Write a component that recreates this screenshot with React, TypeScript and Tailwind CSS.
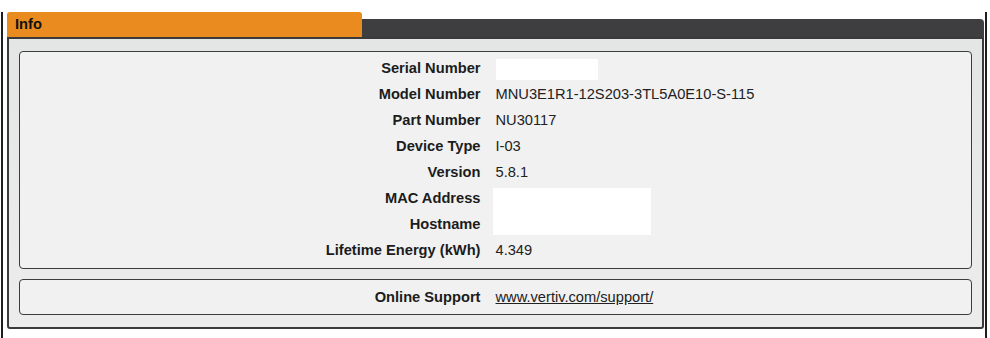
import React from 'react';

interface Row {
  label: string;
  value?: string;
  kind?: 'text' | 'blank' | 'blank2' | 'skip';
}

const rows: Row[] = [
  { label: 'Serial Number', kind: 'blank' },
  { label: 'Model Number', value: 'MNU3E1R1-12S203-3TL5A0E10-S-115' },
  { label: 'Part Number', value: 'NU30117' },
  { label: 'Device Type', value: 'I-03' },
  { label: 'Version', value: '5.8.1' },
  { label: 'MAC Address', kind: 'blank2' },
  { label: 'Hostname', kind: 'skip' },
  { label: 'Lifetime Energy (kWh)', value: '4.349' },
];

const font = { fontFamily: '"Liberation Sans", Arial, sans-serif' };

const Label: React.FC<{ children: React.ReactNode }> = ({ children }) => (
  <div className="h-[26px] flex items-center justify-end font-bold text-[#1c1c1c] whitespace-nowrap">
    {children}
  </div>
);

export default function App() {
  return (
    <div className="w-[990px] h-[338px] bg-white text-[14.67px] leading-none" style={font}>
      <div className="w-[987px] h-full border-r-2 border-[#1e1e1e]">
        <div className="ml-[1px] mt-3 h-[326px] border-l-2 border-[#1e1e1e] pl-[4px] pr-[1px]">
          {/* header */}
          <div className="flex items-end h-[25px]">
            <div className="w-[355px] h-[25px] bg-[#e98b1e] rounded-t-[3px] pl-[8px] pt-[5px] font-bold text-[#111]">
              Info
            </div>
            <div className="flex-1 h-[18px] bg-[#3e3e40] rounded-tr-[4px]" />
          </div>

          {/* body */}
          <div className="h-[292px] border-2 border-[#3a3a3a] rounded-b-[3px] bg-gradient-to-b from-[#e4e6e6] to-[#ececec] px-[10px] pt-[12px] flex flex-col gap-[10px]">
            <div className="h-[218px] border-[1.5px] border-[#3c3c3c] rounded-[4px] bg-[#f1f1f1] pt-[3px]">
              <div className="grid grid-cols-[460.5px_1fr] gap-x-[15px]">
                {rows.map((r) => (
                  <React.Fragment key={r.label}>
                    <Label>{r.label}</Label>
                    {r.kind === 'blank' ? (
                      <div className="h-[26px]">
                        <div className="mt-[3.5px] w-[102px] h-[21px] bg-white" />
                      </div>
                    ) : r.kind === 'blank2' ? (
                      <div className="row-span-2 h-[52px]">
                        <div className="mt-[2.5px] -ml-[3px] w-[158px] h-[47px] bg-white" />
                      </div>
                    ) : r.kind === 'skip' ? null : (
                      <div className="h-[26px] flex items-center text-[#222] whitespace-nowrap">{r.value}</div>
                    )}
                  </React.Fragment>
                ))}
              </div>
            </div>

            <div className="h-[36px] border-[1.5px] border-[#3c3c3c] rounded-[4px] bg-[#f1f1f1] flex items-center">
              <div className="grid grid-cols-[460.5px_1fr] gap-x-[15px] w-full">
                <Label>Online Support</Label>
                <div className="h-[26px] flex items-center">
                  <a href="#" className="underline text-[#222]">www.vertiv.com/support/</a>
                </div>
              </div>
            </div>
          </div>
        </div>
      </div>
    </div>
  );
}
